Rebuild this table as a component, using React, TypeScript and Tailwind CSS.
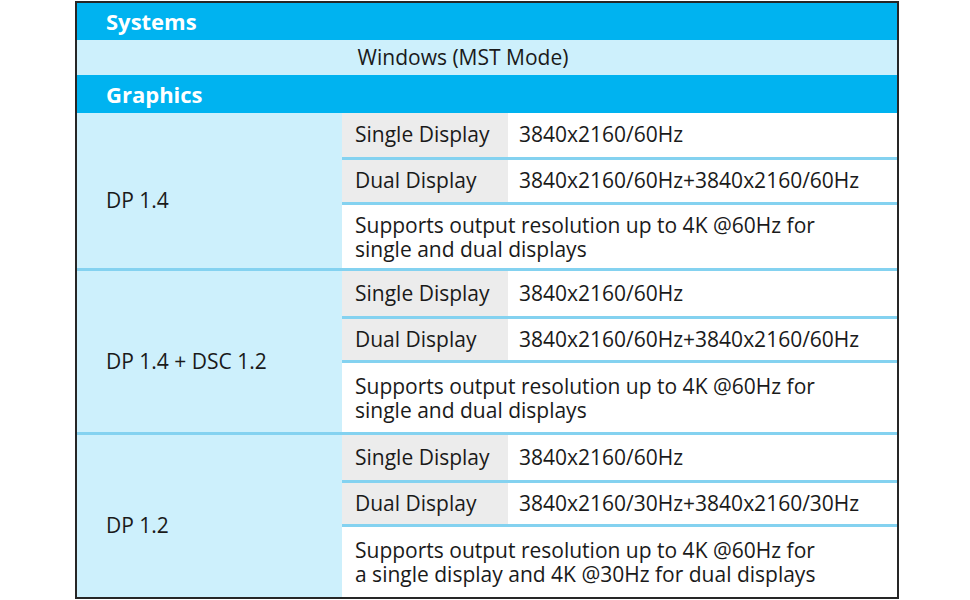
const groups = [
  {
    name: "DP 1.4",
    single: "3840x2160/60Hz",
    dual: "3840x2160/60Hz+3840x2160/60Hz",
    note: ["Supports output resolution up to 4K @60Hz for", "single and dual displays"],
    rows: ["h-[44px]", "h-[42px]", "h-[63px]"],
  },
  {
    name: "DP 1.4 + DSC 1.2",
    single: "3840x2160/60Hz",
    dual: "3840x2160/60Hz+3840x2160/60Hz",
    note: ["Supports output resolution up to 4K @60Hz for", "single and dual displays"],
    rows: ["h-[45px]", "h-[41px]", "h-[69px]"],
  },
  {
    name: "DP 1.2",
    single: "3840x2160/60Hz",
    dual: "3840x2160/30Hz+3840x2160/30Hz",
    note: ["Supports output resolution up to 4K @60Hz for", "a single display and 4K @30Hz for dual displays"],
    rows: ["h-[45px]", "h-[41px]", "h-[70px]"],
  },
];

function Line() {
  return <div className="h-[3px] bg-[#84d2f0]" />;
}

export default function App() {
  return (
    <div className="h-[600px] w-[970px] bg-white pt-[1px] font-['Open_Sans',sans-serif] text-[21px] text-[#1a1a1a]">
      <div className="ml-[75px] w-[824px] border-2 border-[#262626]">
        <div className="flex h-[37px] items-center bg-[#00b3f0] pl-[29px] text-[22px] font-bold text-white">
          Systems
        </div>
        <div className="flex h-[35px] items-center justify-center bg-[#cdf0fc] pr-[48px]">Windows (MST Mode)</div>
        <div className="flex h-[38px] items-center bg-[#00b3f0] pl-[29px] text-[22px] font-bold text-white">
          Graphics
        </div>
        {groups.map((g, i) => (
          <div key={g.name}>
            <div className="flex">
              <div className="flex w-[265px] items-center bg-[#cdf0fc] pl-[29px] pt-[20px]">{g.name}</div>
              <div className="flex-1">
                <div className={`flex ${g.rows[0]}`}>
                  <div className="flex w-[166px] items-center bg-[#ececec] pl-[13px]">Single Display</div>
                  <div className="flex flex-1 items-center pl-[11px]">{g.single}</div>
                </div>
                <Line />
                <div className={`flex ${g.rows[1]}`}>
                  <div className="flex w-[166px] items-center bg-[#ececec] pl-[13px]">Dual Display</div>
                  <div className="flex flex-1 items-center pl-[11px]">{g.dual}</div>
                </div>
                <Line />
                <div className={`flex flex-col justify-center pl-[13px] leading-[24px] ${g.rows[2]}`}>
                  {g.note.map((t) => (
                    <div key={t}>{t}</div>
                  ))}
                </div>
              </div>
            </div>
            {i < groups.length - 1 && <Line />}
          </div>
        ))}
      </div>
    </div>
  );
}
